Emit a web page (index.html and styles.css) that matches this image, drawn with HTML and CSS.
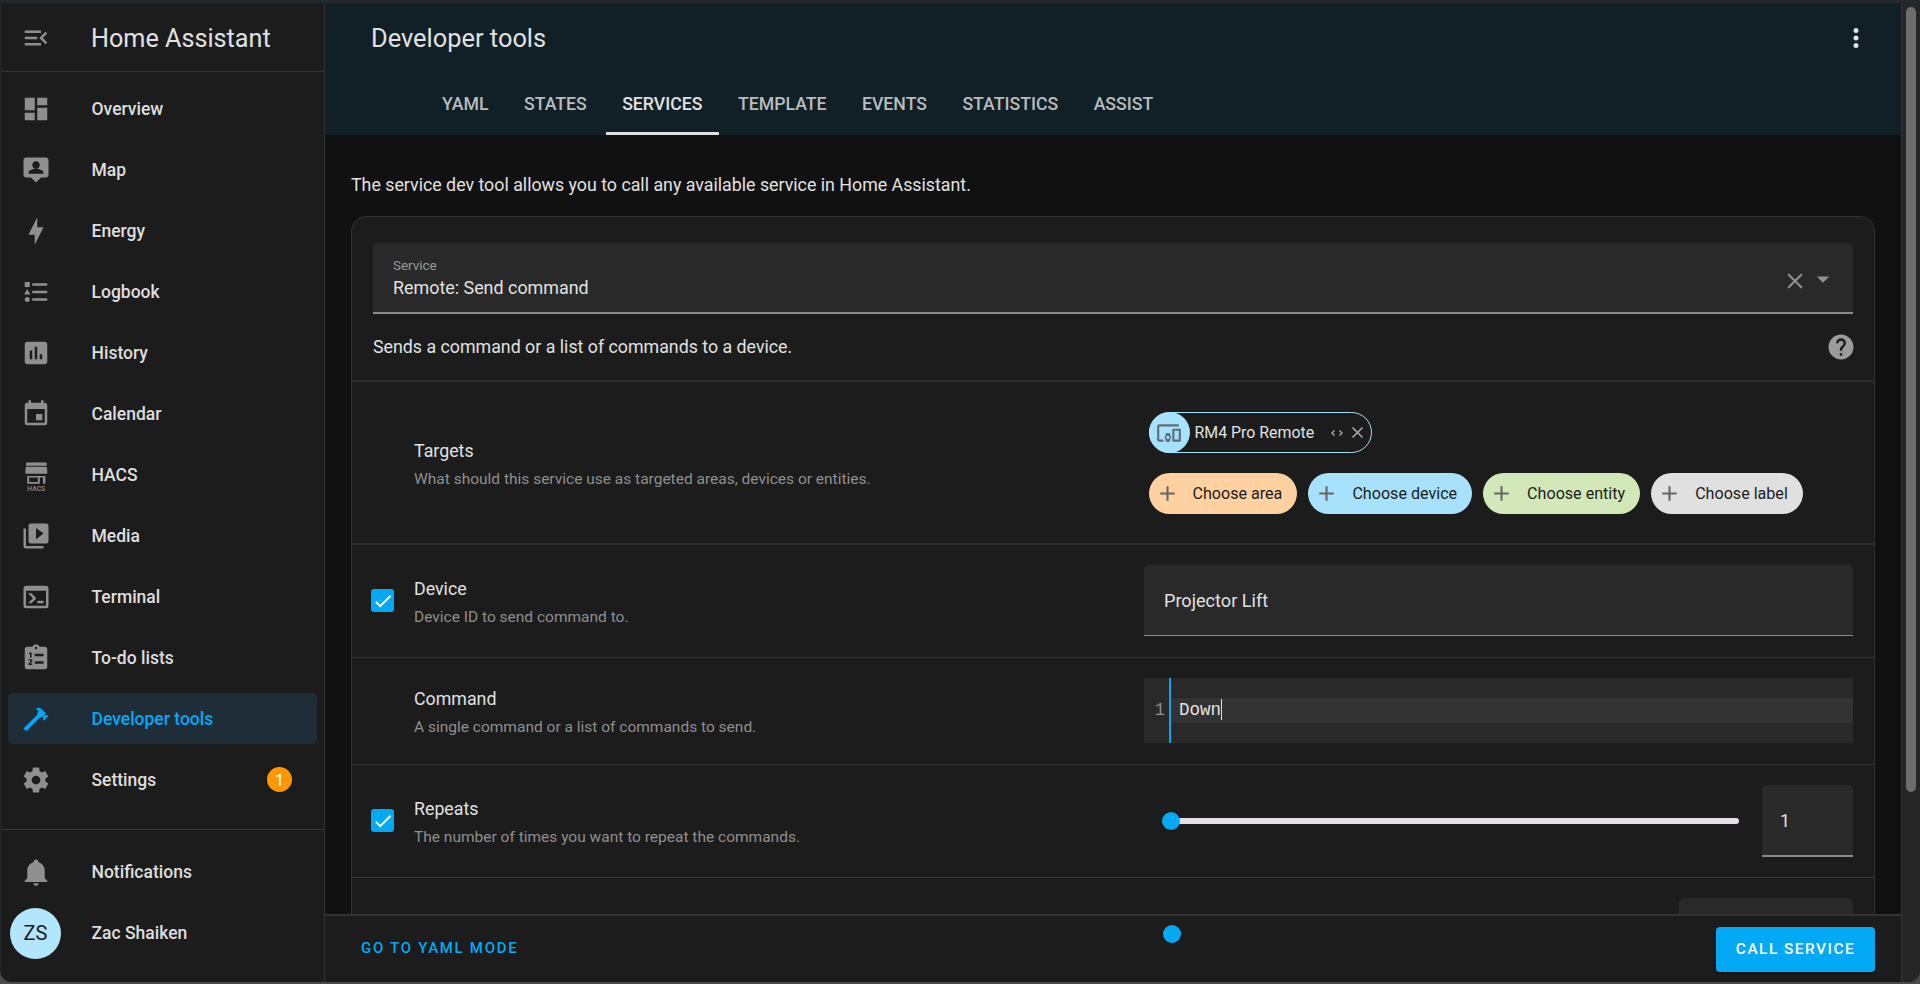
FILE: index.html
```html
<!DOCTYPE html>
<html lang="en">
<head>
<meta charset="utf-8">
<title>Developer tools – Home Assistant</title>
<link rel="stylesheet" href="styles.css">
</head>
<body>
<div class="window">
  <aside class="sidebar">
    <div class="side-head">
      <svg class="icon" viewBox="0 0 24 24"><path d="M21,15.61L19.59,17L14.58,12L19.59,7L21,8.39L17.44,12L21,15.61M3,6H16V8H3V6M3,13V11H13V13H3M3,18V16H16V18H3Z"/></svg>
      <span class="brand">Home Assistant</span>
    </div>
    <nav class="nav">
      <a class="item"><svg class="icon" viewBox="0 0 24 24"><path d="M13,3V9H21V3M13,21H21V11H13M3,21H11V15H3M3,13H11V3H3V13Z"/></svg><span>Overview</span></a>
      <a class="item"><svg class="icon" viewBox="0 0 24 24"><path d="M20 2H4C2.9 2 2 2.9 2 4V16C2 17.1 2.9 18 4 18H8L12 22L16 18H20C21.1 18 22 17.1 22 16V4C22 2.9 21.1 2 20 2M12 5C13.66 5 15 6.34 15 8S13.66 11 12 11 9 9.66 9 8 10.34 5 12 5M18 15H6V14C6 12 10 10.9 12 10.9S18 12 18 14V15Z"/></svg><span>Map</span></a>
      <a class="item"><svg class="icon" viewBox="0 0 24 24"><path d="M11 15H6L13 1V9H18L11 23V15Z"/></svg><span>Energy</span></a>
      <a class="item"><svg class="icon" viewBox="0 0 24 24"><path d="M5,9.5L7.5,14H2.5L5,9.5M3,4H7V8H3V4M5,20A2,2 0 0,0 7,18A2,2 0 0,0 5,16A2,2 0 0,0 3,18A2,2 0 0,0 5,20M9,5V7H21V5H9M9,19H21V17H9V19M9,13H21V11H9V13Z"/></svg><span>Logbook</span></a>
      <a class="item"><svg class="icon" viewBox="0 0 24 24"><path d="M19 3H5C3.9 3 3 3.9 3 5V19C3 20.1 3.9 21 5 21H19C20.1 21 21 20.1 21 19V5C21 3.9 20.1 3 19 3M9 17H7V10H9V17M13 17H11V7H13V17M17 17H15V13H17V17Z"/></svg><span>History</span></a>
      <a class="item"><svg class="icon" viewBox="0 0 24 24"><path d="M19,19H5V8H19M16,1V3H8V1H6V3H5C3.89,3 3,3.89 3,5V19A2,2 0 0,0 5,21H19A2,2 0 0,0 21,19V5C21,3.89 20.1,3 19,3H18V1M17,12H12V17H17V12Z"/></svg><span>Calendar</span></a>
      <a class="item"><svg class="icon hacs" viewBox="0 0 24 24"><path fill-rule="evenodd" d="M4 2H20.5V4.6H4ZM4 5.3H20.5L21 8V11H3.5V8ZM5 12.8H19.5V19H17.6V14H15V19H5ZM6.5 14V17.5H13.5V14Z"/><text class="hacs-mark" x="12.2" y="24.4">HACS</text></svg><span>HACS</span></a>
      <a class="item"><svg class="icon" viewBox="0 0 24 24"><path d="M4,6H2V20A2,2 0 0,0 4,22H18V20H4M20,2H8A2,2 0 0,0 6,4V16A2,2 0 0,0 8,18H20A2,2 0 0,0 22,16V4A2,2 0 0,0 20,2M12,14.5V5.5L18,10L12,14.5Z"/></svg><span>Media</span></a>
      <a class="item"><svg class="icon" viewBox="0 0 24 24"><path d="M20,19V7H4V19H20M20,3A2,2 0 0,1 22,5V19A2,2 0 0,1 20,21H4A2,2 0 0,1 2,19V5C2,3.89 2.9,3 4,3H20M13,17V15H18V17H13M9.58,13L5.57,9H8.4L11.7,12.3C12.09,12.69 12.09,13.33 11.7,13.72L8.42,17H5.59L9.58,13Z"/></svg><span>Terminal</span></a>
      <a class="item"><svg class="icon" viewBox="0 0 24 24"><path fill-rule="evenodd" d="M19,3H14.82C14.4,1.84 13.3,1 12,1C10.7,1 9.6,1.84 9.18,3H5A2,2 0 0,0 3,5V19A2,2 0 0,0 5,21H19A2,2 0 0,0 21,19V5A2,2 0 0,0 19,3M12,3A1,1 0 0,1 13,4A1,1 0 0,1 12,5A1,1 0 0,1 11,4A1,1 0 0,1 12,3M11,8.5H18V10.5H11ZM11,14.5H18V16.5H11ZM6.5,7.5H8.5V11.5H7.2V8.7H6.5ZM6,13H9V15L7.3,16.4H9V17.5H6V16.3L7.7,14.8V14H6Z"/></svg><span>To-do lists</span></a>
      <a class="item active"><svg class="icon" viewBox="0 0 24 24"><path d="M2 19.63L13.43 8.2L12.72 7.5L14.14 6.07L12 3.89C13.2 2.7 15.09 2.7 16.27 3.89L19.87 7.5L18.45 8.91H21.29L22 9.62L18.45 13.21L17.74 12.5V9.62L16.27 11.04L15.56 10.33L4.13 21.76L2 19.63Z"/></svg><span>Developer tools</span></a>
      <a class="item"><svg class="icon" viewBox="0 0 24 24"><path d="M12,15.5A3.5,3.5 0 0,1 8.5,12A3.5,3.5 0 0,1 12,8.5A3.5,3.5 0 0,1 15.5,12A3.5,3.5 0 0,1 12,15.5M19.43,12.97C19.47,12.65 19.5,12.33 19.5,12C19.5,11.67 19.47,11.34 19.43,11L21.54,9.37C21.73,9.22 21.78,8.95 21.66,8.73L19.66,5.27C19.54,5.05 19.27,4.96 19.05,5.05L16.56,6.05C16.04,5.66 15.5,5.32 14.87,5.07L14.5,2.42C14.46,2.18 14.25,2 14,2H10C9.75,2 9.54,2.18 9.5,2.42L9.13,5.07C8.5,5.32 7.96,5.66 7.44,6.05L4.95,5.05C4.73,4.96 4.46,5.05 4.34,5.27L2.34,8.73C2.21,8.95 2.27,9.22 2.46,9.37L4.57,11C4.53,11.34 4.5,11.67 4.5,12C4.5,12.33 4.53,12.65 4.57,12.97L2.46,14.63C2.27,14.78 2.21,15.05 2.34,15.27L4.34,18.73C4.46,18.95 4.73,19.03 4.95,18.95L7.44,17.94C7.96,18.34 8.5,18.68 9.13,18.93L9.5,21.58C9.54,21.82 9.75,22 10,22H14C14.25,22 14.46,21.82 14.5,21.58L14.87,18.93C15.5,18.67 16.04,18.34 16.56,17.94L19.05,18.95C19.27,19.03 19.54,18.95 19.66,18.73L21.66,15.27C21.78,15.05 21.73,14.78 21.54,14.63L19.43,12.97Z"/></svg><span>Settings</span><b class="badge">1</b></a>
    </nav>
    <div class="side-foot">
      <a class="item"><svg class="icon" viewBox="0 0 24 24"><path d="M21,19V20H3V19L5,17V11C5,7.9 7.03,5.17 10,4.29C10,4.19 10,4.1 10,4A2,2 0 0,1 12,2A2,2 0 0,1 14,4C14,4.1 14,4.19 14,4.29C16.97,5.17 19,7.9 19,11V17L21,19M14,21A2,2 0 0,1 12,23A2,2 0 0,1 10,21"/></svg><span>Notifications</span></a>
      <a class="item user"><i class="avatar">ZS</i><span>Zac Shaiken</span></a>
    </div>
  </aside>

  <main class="main">
    <div class="column">
      <header class="header">
        <div class="title-row">
          <h1>Developer tools</h1>
          <svg class="icon dots" viewBox="0 0 24 24"><path d="M12,16A2,2 0 0,1 14,18A2,2 0 0,1 12,20A2,2 0 0,1 10,18A2,2 0 0,1 12,16M12,10A2,2 0 0,1 14,12A2,2 0 0,1 12,14A2,2 0 0,1 10,12A2,2 0 0,1 12,10M12,4A2,2 0 0,1 14,6A2,2 0 0,1 12,8A2,2 0 0,1 10,6A2,2 0 0,1 12,4Z"/></svg>
        </div>
        <div class="tabs">
          <a class="tab">YAML</a><a class="tab">STATES</a><a class="tab current">SERVICES</a><a class="tab">TEMPLATE</a><a class="tab">EVENTS</a><a class="tab">STATISTICS</a><a class="tab">ASSIST</a>
        </div>
      </header>

      <div class="scroll">
        <p class="intro">The service dev tool allows you to call any available service in Home Assistant.</p>
        <section class="card">
          <div class="top">
            <div class="field service">
              <div class="service-text">
                <small>Service</small>
                <span>Remote: Send command</span>
              </div>
              <svg class="icon x" viewBox="0 0 24 24"><path d="M19,6.41L17.59,5L12,10.59L6.41,5L5,6.41L10.59,12L5,17.59L6.41,19L12,13.41L17.59,19L19,17.59L13.41,12L19,6.41Z"/></svg>
              <svg class="icon caret" viewBox="0 0 24 24"><path d="M7,10L12,15L17,10H7Z"/></svg>
            </div>
            <div class="desc-row">
              <span>Sends a command or a list of commands to a device.</span>
              <svg class="icon help" viewBox="0 0 24 24"><path d="M15.07,11.25L14.17,12.17C13.45,12.89 13,13.5 13,15H11V14.5C11,13.39 11.45,12.39 12.17,11.67L13.41,10.41C13.78,10.05 14,9.55 14,9C14,7.89 13.1,7 12,7A2,2 0 0,0 10,9H8A4,4 0 0,1 12,5A4,4 0 0,1 16,9C16,9.88 15.64,10.67 15.07,11.25M13,19H11V17H13M12,2A10,10 0 0,0 2,12A10,10 0 0,0 12,22A10,10 0 0,0 22,12C22,6.47 17.5,2 12,2Z"/></svg>
            </div>
          </div>

          <div class="row targets">
            <div class="check-slot"></div>
            <div class="label"><h3>Targets</h3><p>What should this service use as targeted areas, devices or entities.</p></div>
            <div class="control chips">
              <div class="selected">
                <i class="selected-icon"><svg class="icon" viewBox="0 0 24 24"><path d="M3 6H21V4H3C1.9 4 1 4.9 1 6V18C1 19.1 1.9 20 3 20H7V18H3V6M13 12H9V13.78C8.39 14.33 8 15.11 8 16C8 16.89 8.39 17.67 9 18.22V20H13V18.22C13.61 17.67 14 16.88 14 16S13.61 14.33 13 13.78V12M11 17.5C10.17 17.5 9.5 16.83 9.5 16S10.17 14.5 11 14.5 12.5 15.17 12.5 16 11.83 17.5 11 17.5M22 8H16C15.5 8 15 8.5 15 9V19C15 19.5 15.5 20 16 20H22C22.5 20 23 19.5 23 19V9C23 8.5 22.5 8 22 8M21 18H17V10H21V18Z"/></svg></i>
                <span>RM4 Pro Remote</span>
                <svg class="icon tiny" viewBox="0 0 24 24"><path d="M18.17,12L15,8.83L16.41,7.41L21,12L16.41,16.58L15,15.17L18.17,12M5.83,12L9,15.17L7.59,16.59L3,12L7.59,7.42L9,8.83L5.83,12Z"/></svg>
                <svg class="icon tiny" viewBox="0 0 24 24"><path d="M19,6.41L17.59,5L12,10.59L6.41,5L5,6.41L10.59,12L5,17.59L6.41,19L12,13.41L17.59,19L19,17.59L13.41,12L19,6.41Z"/></svg>
              </div>
              <div class="choose-row">
                <a class="choose area"><svg class="icon" viewBox="0 0 24 24"><path d="M19,13H13V19H11V13H5V11H11V5H13V11H19V13Z"/></svg>Choose area</a>
                <a class="choose device"><svg class="icon" viewBox="0 0 24 24"><path d="M19,13H13V19H11V13H5V11H11V5H13V11H19V13Z"/></svg>Choose device</a>
                <a class="choose entity"><svg class="icon" viewBox="0 0 24 24"><path d="M19,13H13V19H11V13H5V11H11V5H13V11H19V13Z"/></svg>Choose entity</a>
                <a class="choose labelchip"><svg class="icon" viewBox="0 0 24 24"><path d="M19,13H13V19H11V13H5V11H11V5H13V11H19V13Z"/></svg>Choose label</a>
              </div>
            </div>
          </div>

          <div class="row device-row">
            <div class="check-slot"><i class="check"><svg viewBox="0 0 24 24"><path d="M21,7L9,19L3.5,13.5L4.91,12.09L9,16.17L19.59,5.59L21,7Z"/></svg></i></div>
            <div class="label"><h3>Device</h3><p>Device ID to send command to.</p></div>
            <div class="control"><div class="field plain">Projector Lift</div></div>
          </div>

          <div class="row command-row">
            <div class="check-slot"></div>
            <div class="label"><h3>Command</h3><p>A single command or a list of commands to send.</p></div>
            <div class="control">
              <div class="code">
                <div class="gutter">1</div>
                <div class="lines"><div class="line">Down</div></div>
              </div>
            </div>
          </div>

          <div class="row repeats-row">
            <div class="check-slot"><i class="check"><svg viewBox="0 0 24 24"><path d="M21,7L9,19L3.5,13.5L4.91,12.09L9,16.17L19.59,5.59L21,7Z"/></svg></i></div>
            <div class="label"><h3>Repeats</h3><p>The number of times you want to repeat the commands.</p></div>
            <div class="control slider-wrap">
              <div class="slider"><i class="thumb"></i></div>
              <div class="field number">1</div>
            </div>
          </div>

          <div class="row next-row">
            <div class="control next-control"><div class="field next-field"></div></div>
          </div>
        </section>
      </div>

      <footer class="footer">
        <a class="yaml-link">GO TO YAML MODE</a>
        <a class="call">CALL SERVICE</a>
      </footer>
      <i class="float-thumb"></i>
    </div>
    <div class="gutterbar"><i class="scrollthumb"></i></div>
  </main>
</div>
</body>
</html>
```
FILE: styles.css
```css
* { box-sizing: border-box; }
html, body { margin: 0; height: 100%; background: #4a4a4a; overflow: hidden; }
body { font-family: Roboto, "Liberation Sans", sans-serif; color: #e1e1e1; }
h1, h3, p { margin: 0; font-weight: 400; }
i { font-style: normal; display: block; }
.icon { width: 30px; height: 30px; fill: #8f8f8f; flex: none; display: block; }
.hacs { overflow: visible; }
.hacs-mark { font-family: Roboto, sans-serif; font-size: 5.4px; font-weight: 500; text-anchor: middle; }

.window { height: 982px; padding: 3px 0 0 1px; display: flex; background: #24282c; border-radius: 0 0 12px 12px; overflow: hidden; }

.sidebar { width: 324px; flex: none; background: #1c1c1c; border-right: 1px solid #333; display: flex; flex-direction: column; }
.side-head { height: 69px; flex: none; display: flex; align-items: center; padding: 2px 0 0 20px; border-bottom: 1px solid #333; }
.brand { margin-left: 40px; font-size: 25.2px; color: #e1e1e1; }
.nav { padding-top: 6px; flex: 1; }
.item { height: 61px; display: flex; align-items: center; padding-left: 20px; margin: 0 7px 0 0; font-size: 17.5px; font-weight: 500; color: #dedede; position: relative; }
.item > span { margin-left: 40.5px; }
.item.active { color: #03a9f4; }
.item.active .icon { fill: #03a9f4; }
.item.active::before { content: ""; position: absolute; left: 7px; right: 0; top: 5px; bottom: 5px; background: #1f2d38; border-radius: 5px; z-index: 0; }
.item.active > * { position: relative; }
.badge { position: absolute; left: 266px; top: 18px; width: 25px; height: 25px; border-radius: 50%; background: #ff9800; color: #fff; font-size: 17px; font-weight: 400; display: flex; align-items: center; justify-content: center; }
.side-foot { border-top: 1px solid #333; padding: 11.5px 0 18.5px; }
.user { padding-left: 9px; }
.user > span { margin-left: 30.5px; }
.avatar { width: 51px; height: 51px; border-radius: 50%; background: #b3e5fc; color: #1c1c1c; font-size: 20px; font-weight: 400; display: flex; align-items: center; justify-content: center; flex: none; }

.main { flex: 1; min-width: 0; display: flex; background: #111; }
.column { flex: 1; min-width: 0; display: flex; flex-direction: column; position: relative; }
.header { height: 132px; flex: none; background: #112026; }
.title-row { height: 69px; display: flex; align-items: center; justify-content: space-between; padding: 0 30px 0 46px; }
h1 { font-size: 25.4px; color: #e1e1e1; }
.dots { fill: #e1e1e1; }
.tabs { height: 63px; display: flex; gap: 3.4px; padding-left: 101px; }
.tab { padding: 4px 16px 0; height: 63px; display: flex; align-items: center; font-size: 17.7px; font-weight: 500; color: #b9bcbe; border-bottom: 3px solid transparent; }
.tab.current { color: #e1e1e1; border-bottom-color: #e1e1e1; }

.scroll { flex: 1; min-height: 0; overflow: hidden; padding: 0 26px 0 26px; }
.intro { height: 81px; padding-top: 38px; font-size: 17.8px; line-height: 24px; color: #e1e1e1; }

.card { background: #1c1c1c; border: 1px solid #333; border-radius: 15px; }
.top { padding: 26px 21px 0 21px; border-bottom: 2px solid #2b2b2b; }
.field { background: #292929; border-radius: 5px 5px 0 0; border-bottom: 1px solid #8a8a8a; }
.service { height: 71px; display: flex; align-items: center; padding: 0 15px 0 20px; border-bottom-width: 2px; }
.service-text { flex: 1; display: flex; flex-direction: column; font-size: 17.9px; }
.service-text small { font-size: 13.4px; color: #9b9b9b; line-height: 16px; margin-bottom: 3px; }
.service-text span { line-height: 22px; margin-bottom: -2px; }
.x { width: 26px; height: 26px; margin-top: 6px; }
.caret { width: 30px; height: 30px; margin-top: 3px; }
.desc-row { height: 66px; display: flex; align-items: center; justify-content: space-between; font-size: 17.8px; padding-bottom: 2px; }
.help { fill: #9b9b9b; width: 30px; height: 30px; margin: 2px -3px 0 0; }

.row { display: flex; align-items: flex-start; border-bottom: 1px solid #333; padding-right: 21px; }
.check-slot { width: 62px; flex: none; padding-left: 19px; }
.check { width: 23px; height: 23px; border-radius: 3px; background: #03a9f4; display: flex; align-items: center; justify-content: center; }
.check svg { width: 22px; height: 22px; fill: #fff; }
.label { flex: 1; min-width: 0; }
.label h3 { font-size: 17.8px; line-height: 24px; color: #e1e1e1; }
.label p { font-size: 15.5px; line-height: 22px; color: #8f8f8f; margin-top: 5px; }
.control { width: 709px; flex: none; }

.targets { height: 163px; border-bottom-width: 2px; border-bottom-color: #2b2b2b; }
.targets .label { padding-top: 57px; }
.targets .control { padding: 30px 0 0 4.5px; }
.selected { width: 223px; height: 41px; border: 1px solid #a8e1fb; border-radius: 21px; display: flex; align-items: center; font-size: 15.9px; color: #e1e1e1; position: relative; }
.selected-icon { width: 41px; height: 41px; margin: -1px 0 -1px -1px; border-radius: 50%; background: #a8e1fb; display: flex; align-items: center; justify-content: center; flex: none; }
.selected-icon .icon { width: 26px; height: 26px; fill: #5d6f78; }
.selected > span { margin-left: 5px; flex: 1; white-space: nowrap; }
.tiny { width: 16px; height: 16px; margin-right: 5px; fill: #aaa; }
.tiny + .tiny { width: 19px; height: 19px; margin: 0 4px 0 -2px; }
.choose-row { display: flex; gap: 11px; margin-top: 20px; }
.choose { height: 41px; border-radius: 21px; display: flex; align-items: center; color: #1c1c1c; font-size: 16.1px; padding-right: 15px; }
.choose .icon { width: 25px; height: 25px; fill: #666; margin: 0 13px 0 6px; }
.area { background: #ffd0a0; }
.device { background: #a8e1fb; }
.entity { background: #d3e8b8; }
.labelchip { background: #e0e0e0; }

.device-row { height: 113px; padding-top: 20px; }
.device-row .label, .repeats-row .label { padding-top: 12px; }
.device-row .check-slot { padding-top: 24px; }
.plain { height: 71px; display: flex; align-items: center; padding-left: 20px; font-size: 18.1px; }

.command-row { height: 107px; padding-top: 20px; }
.command-row .label { padding-top: 9px; }
.code { height: 65px; background: #292929; display: flex; font-family: "Liberation Mono", monospace; font-size: 17.5px; }
.gutter { width: 27px; flex: none; border-right: 2px solid #03a9f4; padding: 20px 4px 0 0; line-height: 25px; text-align: right; color: #8f8f8f; }
.lines { flex: 1; padding-top: 20px; }
.line { height: 25px; line-height: 25px; background: #333; padding-left: 8px; position: relative; }
.line::after { content: ""; display: inline-block; width: 1px; height: 21px; background: #ddd; vertical-align: -5px; }

.repeats-row { height: 113px; padding-top: 20px; }
.repeats-row .check-slot { padding-top: 24px; }
.slider-wrap { display: flex; align-items: center; }
.slider { flex: 1; height: 6px; margin: 0 23px 0 27px; margin-top: 0; background: #e4e0e6; border-radius: 3px; position: relative; }
.thumb, .float-thumb { width: 18px; height: 18px; border-radius: 50%; background: #03a9f4; position: absolute; }
.thumb { left: -9px; top: -6px; }
.number { width: 91px; height: 72px; display: flex; align-items: center; padding-left: 18px; font-size: 17.8px; border-bottom-width: 2px; }

.next-row { border: 0; padding-top: 20px; justify-content: flex-end; }
.next-control { display: flex; justify-content: flex-end; }
.next-field { width: 174px; height: 70px; }

.footer { height: 68px; flex: none; background: #1c1c1c; border-top: 2px solid #333; display: flex; align-items: center; justify-content: space-between; padding: 0 26px 0 36px; position: relative; }
.yaml-link { color: #03a9f4; font-size: 15px; font-weight: 500; letter-spacing: 1.7px; margin-top: -2px; }
.call { width: 159px; height: 45px; background: #03a9f4; color: #fff; font-size: 15.4px; font-weight: 500; letter-spacing: 1.5px; border-radius: 4px; display: flex; align-items: center; justify-content: center; box-shadow: 0 2px 3px rgba(0,0,0,.4); }
.float-thumb { left: 838px; top: 922px; z-index: 3; }

.gutterbar { width: 19px; flex: none; background: #262626; border-left: 1px solid #333; padding: 4px 4px 0 4px; }
.scrollthumb { width: 10px; height: 785px; border-radius: 5px; background: #6c6c6c; }
```
